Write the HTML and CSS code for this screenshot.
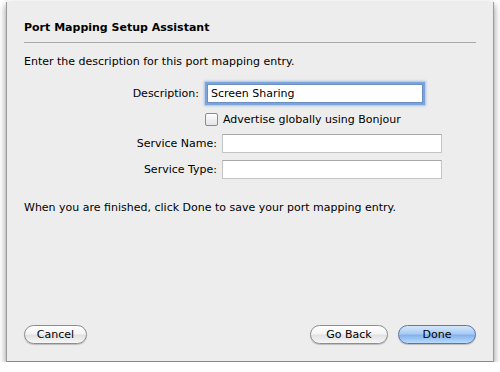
FILE: index.html
```html
<!DOCTYPE html>
<html lang="en">
<head>
    <meta charset="UTF-8">
    <title>Port Mapping Setup Assistant</title>
    <link rel="stylesheet" href="styles.css">
</head>
<body>
    <div class="sheet">
        <div class="title">Port Mapping Setup Assistant</div>
        <div class="rule"></div>

        <p class="intro">Enter the description for this port mapping entry.</p>

        <div class="row row-desc">
            <label class="label label-desc" for="desc">Description:</label>
            <input class="field field-focus" id="desc" type="text" value="Screen Sharing">
        </div>

        <div class="row row-check">
            <span class="checkbox"></span>
            <span>Advertise globally using Bonjour</span>
        </div>

        <div class="row row-service">
            <label class="label label-service" for="sname">Service Name:</label>
            <input class="field" id="sname" type="text">
        </div>

        <div class="row row-service">
            <label class="label label-service" for="stype">Service Type:</label>
            <input class="field" id="stype" type="text">
        </div>

        <p class="finish">When you are finished, click Done to save your port mapping entry.</p>

        <div class="buttons">
            <button class="btn btn-cancel">Cancel</button>
            <div class="spacer"></div>
            <button class="btn btn-back">Go Back</button>
            <button class="btn btn-done">Done</button>
        </div>
    </div>
</body>
</html>
```

FILE: styles.css
```css
body {
    margin: 0;
    background-color: #fff;
    font-family: "DejaVu Sans", sans-serif;
    font-size: 11px;
    color: #000;
}

.sheet {
    display: flex;
    flex-direction: column;
    width: 452px;
    height: 325px;
    margin: 2px 0 0 6px;
    padding: 17px 17px 17px 17px;
    background-color: #ededed;
    border-left: 1px solid #9a9a9a;
    border-right: 1px solid #9a9a9a;
    border-bottom: 1px solid #8a8a8a;
    box-shadow: 0 3px 7px rgba(0, 0, 0, 0.45);
}

.title {
    font-weight: bold;
    line-height: 16px;
    margin-top: 1px;
}

.rule {
    margin-top: 6px;
    border-top: 1px solid #a9a9a9;
}

.intro {
    margin: 11px 0 0 0;
    line-height: 16px;
}

.row {
    display: flex;
    align-items: center;
}

.label {
    text-align: right;
    padding-right: 5px;
}

.label-desc {
    width: 175px;
}

.label-service {
    width: 193px;
}

.field {
    box-sizing: border-box;
    height: 19px;
    padding: 1px 3px;
    font-family: "DejaVu Sans", sans-serif;
    font-size: 11px;
    border: 1px solid #c4c4c4;
    border-top-color: #a8a8a8;
    background-color: #fff;
    outline: none;
}

.row-desc {
    margin-top: 11px;
}

.field-focus {
    width: 216px;
    margin: 3px;
    border-color: #6d8fbf;
    box-shadow: 0 0 0 2px #7ca4dc, 0 0 2px 3px rgba(124, 164, 220, 0.6);
}

.row-check {
    margin-top: 5px;
    height: 16px;
    padding-left: 181px;
}

.checkbox {
    width: 11px;
    height: 11px;
    margin-right: 5px;
    border: 1px solid #8c8c8c;
    border-radius: 2px;
    background: linear-gradient(#fefefe, #e4e4e4);
}

.row-service {
    margin-top: 7px;
}

.row-service .field {
    width: 220px;
}

.finish {
    margin: 21px 0 0 0;
    line-height: 16px;
}

.buttons {
    display: flex;
    margin-top: auto;
}

.spacer {
    flex: 1;
}

.btn {
    height: 19px;
    padding: 0;
    font-family: "DejaVu Sans", sans-serif;
    font-size: 11px;
    color: #000;
    border: 1px solid #8d8d8d;
    border-radius: 10px;
    background: linear-gradient(#ffffff 0%, #f4f4f4 45%, #e2e2e2 55%, #f6f6f6 100%);
    box-shadow: 0 1px 1px rgba(0, 0, 0, 0.2);
}

.btn-cancel {
    width: 63px;
}

.btn-back {
    width: 78px;
}

.btn-done {
    width: 78px;
    margin-left: 10px;
    border-color: #5a77a6;
    background: linear-gradient(#d6e8fb 0%, #a8cbf4 45%, #84b3ec 55%, #b9dafb 100%);
}
```
